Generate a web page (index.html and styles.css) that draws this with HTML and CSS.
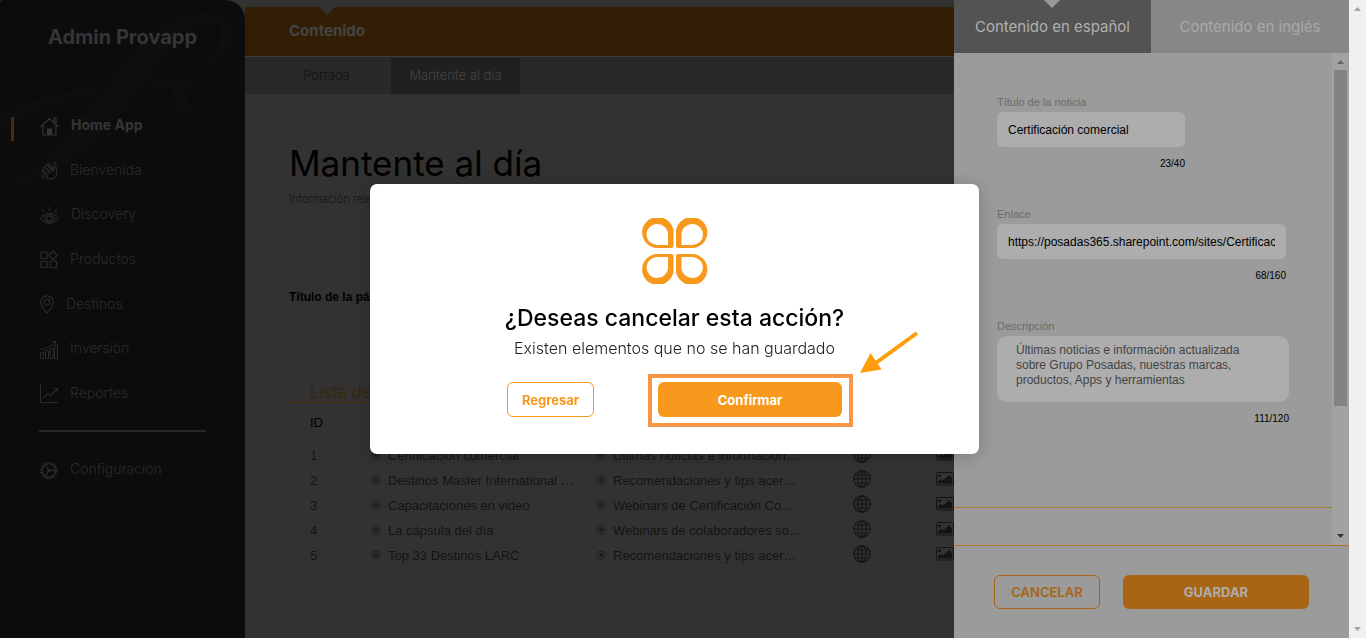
FILE: index.html
```html
<!DOCTYPE html>
<html lang="es">
<head>
<meta charset="utf-8">
<meta name="viewport" content="width=device-width, initial-scale=1">
<title>Admin Provapp</title>
<link rel="stylesheet" href="styles.css">
</head>
<body>
<svg class="defs" aria-hidden="true">
  <symbol id="globe" viewBox="0 0 18 18"><g fill="none" stroke="currentColor" stroke-width="1.1"><circle cx="9" cy="9" r="8.3"/><ellipse cx="9" cy="9" rx="4.2" ry="8.3"/><path d="M9 .7v16.6M.7 9h16.6M2 5h14M2 13h14"/></g></symbol>
  <symbol id="image" viewBox="0 0 18 14"><rect x=".5" y=".5" width="17" height="12.5" rx="1" fill="none" stroke="currentColor"/><circle cx="3.5" cy="3.7" r="1.5" fill="currentColor"/><path d="M2 11.5V9l3-2L7 8.500l3-2.500 3-3 3 3v5.500z" fill="currentColor"/></symbol>
  <symbol id="bullet" viewBox="0 0 10 10"><circle cx="5" cy="5" r="4" fill="none" stroke="currentColor" stroke-width="1"/><circle cx="5" cy="5" r="2" fill="currentColor"/></symbol>
</svg>
<div class="app">
  <aside class="sidebar">
    <svg class="mark" viewBox="0 0 245 190" aria-hidden="true"><path d="M0 185C45 180 75 125 105 87C135 50 160 12 205 12C246 14 246 62 200 63C224 52 230 18 205 22C170 30 150 85 115 120C75 160 40 190 0 185zM0 115C30 98 70 90 102 87L95 94C50 102 25 112 0 136zM135 93C150 80 180 73 199 78C180 80 184 111 202 112C208 111 211 104 212 100C216 112 200 117 187 113C170 108 168 90 175 83C160 84 150 92 135 93z"/></svg>
    <p class="brand">Admin Provapp</p>
    <nav class="nav">
      <a href="#" class="item current"><svg width="19" height="19" viewBox="0 0 19 19"><path d="M.7 10L9.500 1.500l8.800 8.500M3 8.500V18h13V8.500M14 5V1h2v6" fill="none" stroke="currentColor" stroke-width="1.200"/><path d="M7 18v-6.500h5V18z" fill="currentColor"/></svg>Home App</a>
      <a href="#" class="item"><svg width="18" height="19" viewBox="0 0 17 19"><g fill="none" stroke="currentColor" stroke-width="1.200" stroke-linecap="round"><path d="M3 9l4 5M4.500 6l5 6M7 4l5 6M9.500 3.500L13 9V6.500c0-2 2-1.500 2.500 0l1 6c0 4-4 6-8 5C5 17 4 13 2 10.500c-1-1.500.5-2.500 1.500-1C2.500 7 4 5 5 6.500 5 4 6.500 3 7.500 4.500 8 2.500 9 2 10 3.500"/><path d="M13 1.500c1.500 0 2.500 1 2.500 2.500M1 14c0 1.500 1 2.500 2.500 2.500"/></g></svg>Bienvenida</a>
      <a href="#" class="item"><svg width="19" height="19" viewBox="0 0 19 19"><g fill="none" stroke="currentColor" stroke-width="1.200"><path d="M.7 12.500C5 5.500 14 5.500 18.300 12.500 14 19 5 19 .7 12.500z"/><path d="M4.500 12.500c2-5 8-5 10 0-2 5-8 5-10 0z"/><circle cx="9.500" cy="12.500" r="2.500"/><path d="M9.500 1v4M2 3l2 3M17 3l-2 3"/></g></svg>Discovery</a>
      <a href="#" class="item"><svg width="18" height="19" viewBox="0 0 18 19"><g fill="none" stroke="currentColor" stroke-width="1.200"><rect x=".7" y="2" width="6.500" height="6.500" rx="1"/><rect x=".7" y="11" width="6.500" height="6.500" rx="1"/><rect x="10" y="11" width="6.500" height="6.500" rx="1"/><path d="M13 1l4.300 4.300L13 9.500 8.800 5.300z" stroke-linejoin="round"/></g></svg>Productos</a>
      <a href="#" class="item"><svg width="14" height="19" viewBox="0 0 14 19"><g fill="none" stroke="currentColor" stroke-width="1.200"><path d="M7 17.800C3.500 14 .7 10.500.7 7.200a6.300 6.300 0 0 1 12.600 0c0 3.300-2.800 6.800-6.300 10.600z"/><circle cx="7" cy="7.200" r="2.800"/></g></svg>Destinos</a>
      <a href="#" class="item"><svg width="18" height="19" viewBox="0 0 18 19"><g fill="none" stroke="currentColor"><path d="M.5 12.500h3v6h-3zM5.500 10.500h3v8h-3zM10 8.500h3v10h-3zM14.500 5.500h3v13h-3zM0 9.500C7 9 11 6 15.500 1.500M12.500 1.500h3v3"/></g></svg>Inversión</a>
      <a href="#" class="item"><svg width="18" height="19" viewBox="0 0 18 19"><path d="M.5 0v18.500H18M3 14l5-4.500 2.500 2L17 5M13 4.500h4.500V9" fill="none" stroke="currentColor" stroke-width="1.100"/></svg>Reportes</a>
    </nav>
    <hr class="rule">
    <a href="#" class="item settings"><svg width="18" height="19" viewBox="0 0 18 19"><g fill="none" stroke="currentColor"><circle cx="9" cy="9.500" r="6.800" stroke-width="1.300"/><circle cx="9" cy="9.500" r="8.100" stroke-width="1.600" stroke-dasharray="1.600 1.600"/><path d="M9 9.500h6.500M9 9.500L5.500 4M9 9.500L5.500 15" stroke-width="1.300"/></g><circle cx="9" cy="9.500" r="1.800" fill="currentColor"/></svg>Configuración</a>
  </aside>

  <main class="main">
    <header class="bar">Contenido</header>
    <nav class="tabs"><a href="#" class="tab">Portada</a><a href="#" class="tab active">Mantente al día</a></nav>
    <section class="content">
      <h1 class="title">Mantente al día</h1>
      <p class="lead">Información relevante</p>
      <p class="page-label">Título de la página</p>
      <h2 class="list-title">Lista de noticias</h2>
      <table class="news">
        <colgroup><col class="c-id"><col class="c-name"><col class="c-text"><col class="c-link"><col class="c-img"></colgroup>
        <thead><tr><th scope="col">ID</th><td></td><td></td><td></td><td></td></tr></thead>
        <tbody>
          <tr><td>1</td><td><svg class="dot"><use href="#bullet"/></svg>Certificación comercial</td><td><svg class="dot"><use href="#bullet"/></svg>Últimas noticias e información…</td><td><svg class="globe"><use href="#globe"/></svg></td><td><svg class="pic"><use href="#image"/></svg></td></tr>
          <tr><td>2</td><td><svg class="dot"><use href="#bullet"/></svg>Destinos Master International …</td><td><svg class="dot"><use href="#bullet"/></svg>Recomendaciones y tips acer…</td><td><svg class="globe"><use href="#globe"/></svg></td><td><svg class="pic"><use href="#image"/></svg></td></tr>
          <tr><td>3</td><td><svg class="dot"><use href="#bullet"/></svg>Capacitaciones en video</td><td><svg class="dot"><use href="#bullet"/></svg>Webinars de Certificación Co…</td><td><svg class="globe"><use href="#globe"/></svg></td><td><svg class="pic"><use href="#image"/></svg></td></tr>
          <tr><td>4</td><td><svg class="dot"><use href="#bullet"/></svg>La cápsula del día</td><td><svg class="dot"><use href="#bullet"/></svg>Webinars de colaboradores so…</td><td><svg class="globe"><use href="#globe"/></svg></td><td><svg class="pic"><use href="#image"/></svg></td></tr>
          <tr><td>5</td><td><svg class="dot"><use href="#bullet"/></svg>Top 33 Destinos LARC</td><td><svg class="dot"><use href="#bullet"/></svg>Recomendaciones y tips acer…</td><td><svg class="globe"><use href="#globe"/></svg></td><td><svg class="pic"><use href="#image"/></svg></td></tr>
        </tbody>
      </table>
    </section>
  </main>

  <aside class="drawer">
    <div class="langs"><button type="button" class="lang on">Contenido en español</button><button type="button" class="lang">Contenido en inglés</button></div>
    <div class="drawer-body">
      <form class="form">
        <div class="field short"><label for="f1">Título de la noticia</label><input id="f1" type="text" value="Certificación comercial"><span class="count">23/40</span></div>
        <div class="field"><label for="f2">Enlace</label><input id="f2" type="text" value="https://posadas365.sharepoint.com/sites/Certificacion"><span class="count">68/160</span></div>
        <div class="field long"><label for="f3">Descripción</label><textarea id="f3">Últimas noticias e información actualizada sobre Grupo Posadas, nuestras marcas, productos, Apps y herramientas</textarea><span class="count">111/120</span></div>
        <div class="form-end"></div>
      </form>
      <div class="scroll inner" aria-hidden="true"><i class="up"></i><i class="thumb"></i><i class="down"></i></div>
    </div>
    <footer class="actions"><button type="button" class="btn ghost">CANCELAR</button><button type="button" class="btn solid">GUARDAR</button></footer>
  </aside>
  <div class="scroll outer" aria-hidden="true"><i class="up"></i><i class="down"></i></div>
</div>

<div class="overlay">
  <div class="modal" role="dialog" aria-modal="true" aria-labelledby="q">
    <svg class="logo" viewBox="0 0 66 66" aria-hidden="true"><defs><path id="petal" fill-rule="evenodd" d="M31.500 15.500A15.700 15.500 0 1 0 15.500 30H29.500Q31.500 30 31.500 28zM26 16.500V27H16A10.700 10.500 0 1 1 26 16.500z"/></defs><g fill="#f8981d"><use href="#petal"/><use href="#petal" transform="matrix(-1 0 0 1 65.500 0)"/><use href="#petal" transform="matrix(1 0 0 -1 0 66)"/><use href="#petal" transform="matrix(-1 0 0 -1 65.500 66)"/></g></svg>
    <h2 id="q" class="question">¿Deseas cancelar esta acción?</h2>
    <p class="detail">Existen elementos que no se han guardado</p>
    <div class="choices">
      <button type="button" class="choice back">Regresar</button>
      <div class="confirm-wrap"><button type="button" class="choice confirm">Confirmar</button><span class="frame"></span>
        <svg class="arrow" viewBox="0 0 60 44" aria-hidden="true"><path d="M57 2L13 34" stroke="#ff9c0a" stroke-width="4"/><path d="M0 42L10.500 22 21.500 38.500z" fill="#ff9c0a"/></svg></div>
    </div>
  </div>
</div>
</body>
</html>
```
FILE: styles.css
```css
* { box-sizing: border-box; }
body { margin: 0; background: #323232; font-family: "Liberation Sans", Arial, sans-serif; overflow: hidden; }
h1, h2, p { margin: 0; font-weight: 400; }
a { text-decoration: none; color: inherit; }
button, input, textarea { font: inherit; border: 0; margin: 0; }
.defs { position: absolute; width: 0; height: 0; }
.app { display: flex; min-height: 100vh; }

.sidebar { position: relative; flex: none; width: 245px; background: #0c0c0c; border-radius: 3px 20px 0 0; font-family: Inter, sans-serif; color: #2b2b2b; }
.mark { position: absolute; left: 0; top: 0; width: 245px; height: 190px; fill: #0e0e0e; }
.brand { position: relative; padding-top: 25px; line-height: 24px; font-size: 20px; font-weight: 700; text-align: center; color: #353535; }
.nav { position: relative; display: grid; grid-auto-rows: 1fr; height: 312px; margin-top: 54px; }
.item { position: relative; display: flex; align-items: center; gap: 12px; padding-left: 40px; font-size: 14px; line-height: 22px; font-weight: 300; }
.item svg { flex: none; margin-top: 2px; }
.item.current { color: #353535; font-weight: 700; }
.item.current::before { content: ""; position: absolute; left: 11px; width: 3px; height: 24px; margin-top: 8px; background: #4a2d08; }
.rule { margin: 15px 39px 26px; border: 0; border-top: 2px solid #272727; }

.main { flex: 1; min-width: 0; overflow: hidden; padding-top: 7px; }
.bar { position: relative; height: 50px; padding-left: 44px; background: #321e05; border-bottom: 1px solid #3c3c3c; font: 700 15px/48px Inter, sans-serif; color: #444; }
.bar::before, .lang.on::before { content: ""; position: absolute; top: 0; width: 16px; height: 8px; background: #323232; clip-path: polygon(0 0, 100% 0, 50% 100%); }
.bar::before { left: 74px; }
.tabs { display: flex; height: 37px; padding: 1px 0 0 17px; background: #292929; font: 300 13px/35px Inter, sans-serif; color: #121212; }
.tab { width: 129px; text-align: center; }
.tab.active { background: #202020; color: #444; }
.content { padding: 47px 0 0 44px; }
.title { font: 400 35px/44px Inter, sans-serif; color: #000; white-space: nowrap; }
.lead { margin-top: 6px; font: 300 11px/16px Inter, sans-serif; color: #161616; }
.page-label { margin-top: 82px; font-size: 12px; line-height: 16px; font-weight: 700; color: #000; }
.list-title { margin-top: 78px; padding-left: 21px; border-bottom: 1px solid #4a2d08; font: 300 17px/19px Inter, sans-serif; color: #3a2406; }
.news { table-layout: fixed; width: 667px; border-collapse: collapse; font-size: 13px; color: #141414; }
.news th { height: 40px; padding: 0 0 2px 21px; text-align: left; font-weight: 400; color: #000; }
.news td { height: 25px; padding: 0; white-space: nowrap; }
.news td:first-child { padding-left: 21px; }
.c-id { width: 82px; } .c-name { width: 225px; } .c-text { width: 257px; } .c-link { width: 83px; } .c-img { width: 20px; }
.dot { width: 10px; height: 10px; margin-right: 7px; color: #1d1d1d; }
.globe, .pic { display: block; width: 18px; height: 18px; margin-bottom: 3px; }
.pic { height: 14px; }

.drawer { flex: none; width: 395px; display: flex; flex-direction: column; background: #9b9b9b; }
.langs { display: flex; height: 53px; }
.lang { position: relative; flex: 1; padding: 0; background: #878787; color: #a9a9a9; font: 400 15px/53px Inter, sans-serif; }
.lang.on { flex: none; width: 197px; background: #535353; color: #b0b0b0; }
.lang.on::before { left: 90px; background: #999; }
.drawer-body { flex: 1; display: flex; border-bottom: 1px solid #a9772d; }
.form { flex: 1; display: flex; flex-direction: column; gap: 34px; padding-top: 41px; }
.field { display: flex; flex-direction: column; width: 289px; margin-left: 43px; }
.field.short { width: 188px; }
.field.long { width: 292px; }
.field label { margin-bottom: 2px; font-size: 11px; line-height: 16px; color: #6a6a6a; }
.field input { width: 100%; height: 35px; padding: 0 11px; border-radius: 6px; background: #adadad; font-size: 12px; color: #000; }
.field textarea { width: 100%; height: 66px; padding: 7px 19px; border-radius: 10px; background: #adadad; font-size: 12px; line-height: 15px; color: #444; resize: none; overflow: hidden; }
.count { margin-top: 9px; font-size: 10px; line-height: 16px; text-align: right; color: #000; }
.form-end { height: 38px; margin-top: auto; border-top: 1px solid #a9772d; }
.scroll { display: flex; flex-direction: column; align-items: center; flex: none; width: 17px; color: #a3a3a3; }
.up, .down { width: 7px; height: 4px; background: currentColor; clip-path: polygon(50% 0, 100% 100%, 0 100%); }
.down { margin-top: auto; clip-path: polygon(0 0, 100% 0, 50% 100%); }
.inner { padding: 7px 0; background: #a2a2a2; color: #666; }
.inner .down { background: #333; }
.thumb { width: 13px; height: 336px; margin-top: 6px; background: #838383; }
.outer { padding: 7px 0; background: #f0f0f0; }
.actions { display: flex; gap: 23px; padding: 29px 40px; }
.btn { height: 34px; border-radius: 6px; font: 700 13px/32px Inter, sans-serif; padding: 0; }
.ghost { width: 106px; border: 1px solid #a86514; background: none; color: #a86514; font-weight: 600; }
.solid { flex: 1; background: #a86514; color: #adadad; }

.overlay { position: fixed; inset: 0 17px 0 0; display: flex; align-items: center; justify-content: center; }
.modal { display: flex; flex-direction: column; align-items: center; width: 609px; padding: 34px 0 37px; border-radius: 7px; background: #fff; box-shadow: 0 2px 18px rgba(0, 0, 0, .2); font-family: Inter, sans-serif; }
.logo { width: 66px; height: 66px; }
.question { margin-top: 20px; font-size: 23px; line-height: 28px; font-weight: 500; color: #000; }
.detail { margin-top: 6px; font-size: 16px; line-height: 20px; font-weight: 300; color: #222; }
.choices { display: flex; justify-content: space-between; width: 335px; margin-top: 24px; }
.choice { height: 35px; border-radius: 6px; font-size: 13px; font-weight: 700; padding: 0; }
.back { width: 87px; border: 1px solid #f8981d; background: #fff; color: #f8981d; }
.confirm-wrap { position: relative; }
.confirm { width: 184px; background: #f8981d; color: #fff; }
.frame { position: absolute; inset: -8px -11px -10px -10px; border: 4px solid #f79646; }
.arrow { position: absolute; left: 202px; top: -51px; width: 60px; height: 44px; }
```
